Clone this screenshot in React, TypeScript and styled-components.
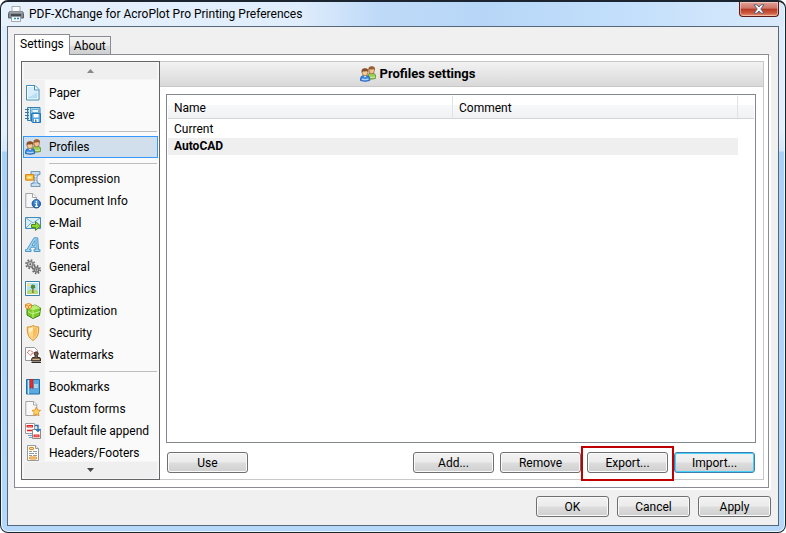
import React from "react";
import styled, { createGlobalStyle, css } from "styled-components";

const GlobalStyle = createGlobalStyle`
  * { box-sizing: border-box; }
  body { margin: 0; background: #fff; }
  button, input, table { font: inherit; color: inherit; }
`;

const Window = styled.main`
  height: 100vh;
  display: flex;
  flex-direction: column;
  padding: 0 6px 6px;
  border: 1px solid #1c252f;
  border-top-width: 2px;
  border-radius: 8px;
  background: linear-gradient(180deg, #dcebfb 0, #e3effb 130px, #d3e6fa 149px, #a9d0f5 150px, #b5d8fa 100%);
  box-shadow: inset 0 0 0 1px #e8f6ff;
  font-family: Roboto, "Noto Sans", sans-serif;
  font-size: 12px;
  line-height: 16px;
  color: #000;
`;

const TitleBar = styled.header`
  flex: none;
  height: 24px;
  margin: 0 -5px;
  padding-left: 6px;
  display: flex;
  align-items: center;
  gap: 5px;
  border-radius: 6px 6px 0 0;
  background: linear-gradient(90deg, #e6f1fc 0, #e0edfc 38%, #bfdaf8 48%, #b7d6f7 62%, #c3dffb 80%, #d9eafb 100%);
`;

const Title = styled.h1`
  margin: 0;
  flex: 1;
  font-size: 12px;
  font-weight: 400;
`;

const CloseButton = styled.button`
  align-self: flex-start;
  width: 40px;
  height: 15px;
  margin-right: 5px;
  padding: 0;
  display: grid;
  place-items: center;
  border: 1px solid #5a1a1a;
  border-top: 0;
  border-radius: 0 0 4px 4px;
  background: linear-gradient(180deg, #dfa299 0, #cf7467 45%, #b43823 50%, #cf5b40 80%, #e49a78 100%);
  box-shadow: inset 0 0 0 1px rgba(255, 220, 210, 0.55);
`;

const Client = styled.div`
  flex: 1;
  min-height: 0;
  display: flex;
  flex-direction: column;
  border: 1px solid #566779;
  background: #f0f0f0;
  padding: 7px 7px 8px 6px;
`;

const Tabs = styled.div`
  flex: none;
  display: flex;
  align-items: flex-end;
`;

const Tab = styled.button<{ $active?: boolean }>`
  height: 18px;
  padding: 0 4px;
  font-size: 12px;
  line-height: 16px;
  border: 1px solid #898c95;
  border-bottom: 0;
  border-left: 0;
  background: linear-gradient(180deg, #f3f3f3 0, #ebebeb 50%, #dcdcdc 51%, #cfcfcf 100%);
  ${(p) =>
    p.$active &&
    css`
      height: 21px;
      margin-bottom: -1px;
      padding: 0 5px 2px;
      border-left: 1px solid #898c95;
      background: #fff;
      z-index: 1;
    `}
`;

const TabPage = styled.section`
  flex: 1;
  min-height: 0;
  display: flex;
  margin-right: 2px;
  padding: 6px 4px 7px 6px;
  border: 1px solid #898c95;
  background: #fff;
  box-shadow: 2px 2px 0 #fff;
`;

const Sidebar = styled.nav`
  flex: none;
  width: 139px;
  display: flex;
  flex-direction: column;
  border: 1px solid #646469;
  background: #fafafa;
`;

const ScrollArrow = styled.button`
  flex: none;
  height: 18px;
  padding: 0;
  display: grid;
  place-items: center;
  border: 1px solid #f6f6f6;
  border-width: 1px 2px;
  background: #efefef;
`;

const Menu = styled.div`
  flex: 1;
  min-height: 0;
  overflow: hidden;
  padding-top: 2px;
  background: linear-gradient(90deg, #f1f1f1 23px, #fafafa 23px);
`;

const MenuItem = styled.button<{ $selected?: boolean }>`
  width: calc(100% - 2px);
  height: 22px;
  margin-left: 1px;
  padding: 0 0 0 1px;
  display: flex;
  align-items: center;
  gap: 8px;
  border: 1px solid ${(p) => (p.$selected ? "#3399ff" : "transparent")};
  background: ${(p) => (p.$selected ? "#d1dfec" : "transparent")};
  text-align: left;
  white-space: nowrap;
`;

const Separator = styled.hr`
  height: 1px;
  margin: 5px 2px 4px 27px;
  border: 0;
  background: #bdbdbd;
`;

const Panel = styled.div`
  flex: 1;
  min-width: 0;
  display: flex;
  flex-direction: column;
  border: 1px solid #c8c8c8;
  border-left: 0;
`;

const PanelTitle = styled.h2`
  flex: none;
  height: 25px;
  margin: 0;
  display: flex;
  align-items: center;
  justify-content: center;
  gap: 4px;
  padding-right: 88px;
  border-bottom: 1px solid #c8c8c8;
  background: linear-gradient(180deg, #f2f2f2, #d9d9d9);
  font-size: 13px;
  font-weight: 700;
`;

const ListBox = styled.div`
  flex: 1;
  min-height: 0;
  margin: 7px 7px 0 6px;
  padding: 1px;
  border: 1px solid #828790;
`;

const Table = styled.table`
  width: 100%;
  table-layout: fixed;
  border-collapse: separate;
  border-spacing: 0;
  text-align: left;
`;

const HeadCell = styled.th<{ $width?: string }>`
  width: ${(p) => p.$width || "auto"};
  height: 23px;
  padding: 2px 6px 0;
  font-weight: 400;
  border-right: 1px solid #dfe2e6;
  border-bottom: 1px solid #d5d5d5;
  background: linear-gradient(180deg, #fff 40%, #f7f8fa 41%, #f1f2f4 100%);
  &:last-child {
    border-right: 0;
  }
`;

const Row = styled.tr<{ $selected?: boolean }>`
  font-weight: ${(p) => (p.$selected ? 700 : 400)};
  td:not(:last-child) {
    background: ${(p) => (p.$selected ? "#efefef" : "transparent")};
  }
`;

const Cell = styled.td`
  height: 17px;
  padding: 0 6px;
  line-height: 17px;
`;

const Spacer = styled.tr`
  height: 2px;
`;

const Actions = styled.div`
  flex: none;
  display: flex;
  align-items: center;
  gap: 6px;
  padding: 9px 8px 6px 7px;
`;

const PushButton = styled.button<{ $focused?: boolean; $small?: boolean }>`
  width: ${(p) => (p.$small ? 73 : 81)}px;
  height: 21px;
  padding: 0;
  border: 1px solid ${(p) => (p.$focused ? "#3c7fb1" : "#707070")};
  border-radius: 3px;
  background: linear-gradient(180deg, #f2f2f2 0, #ebebeb 48%, #dddddd 52%, #cfcfcf 100%);
  box-shadow: inset 0 0 0 1px ${(p) => (p.$focused ? "#48d0f8" : "#fafafa")};
`;

const Push = styled.span`
  flex: 1;
`;

const Highlight = styled.span`
  position: relative;
  display: flex;
  &::after {
    content: "";
    position: absolute;
    inset: -6px -6px -8px;
    border: 2px solid #c00000;
    pointer-events: none;
  }
`;

const Footer = styled.footer`
  flex: none;
  display: flex;
  justify-content: flex-end;
  gap: 8px;
  padding-top: 8px;
`;

const Svg = styled.svg`
  flex: none;
  display: block;
`;

const person = (
  <>
    <path d="M8 8.500q.5-1 2.500-1.200h2.500q2.500.3 2.700 2.700v2.300q-3 1.200-6 .7z" fill="#9ccc55" stroke="#5c8a2a" strokeWidth=".8" />
    <path d="M10 11.200q2.500.6 5-.2" stroke="#d5efa5" fill="none" />
    <ellipse cx="11.700" cy="4.600" rx="2.700" ry="3.200" fill="#f0c090" stroke="#8b5b2a" strokeWidth=".6" />
    <path d="M8.500 4.800C7.800 1.500 9.500.3 11.700.3s4 1.200 3.300 4.500l-1-1.800q-2 .8-4.500.2z" fill="#9a5f30" />
    <path d="M.5 14.600v-1.900q.2-2.900 3-3.200h3q3 .3 3.200 3.200v1.900q-4.600 1.400-9.200 0z" fill="#3b86e0" stroke="#2561b2" strokeWidth=".9" />
    <path d="M3.500 9.500 5 11.500l1.600-2z" fill="#fff" />
    <path d="M1.700 13.100q3.400 1 6.800 0" fill="none" stroke="#a8d3ff" strokeWidth="1.300" />
    <ellipse cx="5" cy="6.600" rx="2.800" ry="3.200" fill="#f3c797" stroke="#8b5b2a" strokeWidth=".6" />
    <path d="M1.700 6.800C1 3.300 2.700 2.200 5 2.200s4.100 1.100 3.300 4.600l-1-1.800q-2 .8-4.500.2z" fill="#85502a" />
  </>
);

const icons: Record<string, React.ReactNode> = {
  paper: (
    <>
      <path d="M1.500.5h8.500l4 4v10.500H1.500z" fill="#fff" stroke="#3f8fbd" />
      <path d="M3 2h6.500v3.500h3V9L3 12z" fill="#d9eefa" />
      <path d="M3 12q4-1 9.500-5v6.500H3z" fill="#b7def3" />
      <path d="M9.500.8v4.200h4.300" fill="#f6fcff" stroke="#3f8fbd" />
    </>
  ),
  save: (
    <>
      <path d="M2.500.5h12.500v13H2.500z" fill="#a4d3ef" stroke="#357fae" />
      <path d="M4.500 1v12" stroke="#dff3fd" />
      <path d="M5.500 1v12" stroke="#5c9dc5" />
      <path d="M7 2.500h6.500v3H7z" fill="#e8f6fd" stroke="#6bacd2" />
      <path d="M0 2.500h4M0 5.500h4M0 8.500h4M0 11.500h4" stroke="#3b759c" />
      <path d="M6.500 6.500h9v9h-8l-1-1z" fill="#5ba6de" stroke="#2874b4" />
      <path d="M8.500 7h5v3.500h-5zM9 12h4.500v3H9z" fill="#fff" />
      <path d="M10 12.500h1.500V15H10z" fill="#3b86c2" />
    </>
  ),
  profiles: person,
  compression: (
    <>
      <path d="M6 .5h9v3h-2v1.500h-1v6H13v1.500h2v3H6v-3h2V11h1.500V5H8V3.500H6z" fill="#a9c9e2" stroke="#6c94b1" strokeWidth=".9" />
      <path d="M9.500 5.500h2M9.500 8h2M9.500 10.500h2M7 2h7M7 14h7" stroke="#e9f4fb" />
      <rect x=".6" y="3.600" width="8" height="5.500" rx=".7" fill="#ffc845" stroke="#d98a1c" strokeWidth="1.200" />
      <path d="M2.500 5.500h4v1.800h-4z" fill="#fff1ae" />
    </>
  ),
  document: (
    <>
      <path d="M.8.500h7l3.700 3.700v10.300H.8z" fill="#f7f7f7" stroke="#a4a4a4" />
      <path d="M7.500.5v4h4" fill="#fff" stroke="#a4a4a4" />
      <circle cx="11.300" cy="10.800" r="4.200" fill="#3377c6" stroke="#174f95" />
      <circle cx="11.300" cy="9" r="2.500" fill="#70aee9" opacity=".5" />
      <path d="M11.500 8v1.400M10.300 10.500h1.200v2.700M10 13.300h3" stroke="#fff" strokeWidth="1.200" fill="none" />
    </>
  ),
  email: (
    <>
      <path d="M.5 2.500h15v11H.5z" fill="#dceefa" stroke="#418bb8" />
      <path d="m1 3 7 5 7-5M1 13l5-5M15 13l-5-5" fill="none" stroke="#6faed2" />
      <path d="M6.500 9.500h4v-3l5 4.500-5 4.500v-3h-4z" fill="#8cd52c" stroke="#4b861b" />
    </>
  ),
  fonts: (
    <>
      <path d="M.5 14.500v-1.800h1.300L9 .8h3.700l.9 11.900h1.400v1.800H9v-1.800h1.400l-.2-2.500H6l-1.400 2.500h1.500v1.800zM7 8.300h3.100L9.800 3.700z" fill="#a9d8f4" stroke="#3f8ec4" strokeWidth=".9" fillRule="evenodd" />
      <path d="M11.200 2l.8 11" stroke="#7dbde5" strokeWidth="1.500" />
    </>
  ),
  general: (
    <>
      <circle cx="5.200" cy="5.200" r="4" fill="none" stroke="#747474" strokeWidth="2.200" strokeDasharray="1.600 1.540" />
      <circle cx="5.200" cy="5.200" r="2.700" fill="#d2d2d2" stroke="#858585" strokeWidth="1.600" />
      <circle cx="5.200" cy="5.200" r="1" fill="#666" />
      <circle cx="11.500" cy="10.700" r="3.600" fill="none" stroke="#666" strokeWidth="2" strokeDasharray="1.410 1.410" />
      <circle cx="11.500" cy="10.700" r="2.300" fill="#d0d0d0" stroke="#777" strokeWidth="1.500" />
      <circle cx="11.500" cy="10.700" r=".9" fill="#606060" />
    </>
  ),
  graphics: (
    <>
      <path d="M.5.500h14v14H.5z" fill="#fff" stroke="#377fac" />
      <path d="M2 2h11v7H2z" fill="#b5e0f8" />
      <path d="M2 9.500q5-2 11 0V13H2z" fill="#b2d97a" />
      <path d="M7.900 7v5" stroke="#774b1d" strokeWidth="1" />
      <path d="M7.900 3.500c1.700 0 2.500 1 2.200 2 .8.900-.2 2.200-1.500 2-1.700.6-3.400-.2-2.700-1.700-.2-1.300.6-2.300 2-2.300z" fill="#4f8a30" />
      <circle cx="3.700" cy="3.700" r="1.500" fill="#ffe26e" />
    </>
  ),
  optimization: (
    <>
      <path d="m2 4.500 8-2.500 5.500 3-1 7.500-6.500 3-6-3.500z" fill="#7bcb2d" stroke="#3a830c" />
      <path d="m2 4.500 6 2.700L15.500 5 10 2z" fill="#bded72" />
      <path d="M8 7.500v7.500M3 8.500l4.500 2.300L15 8.500" stroke="#d1f694" strokeWidth=".9" fill="none" />
      <path d="m.5 1.500 3-1 3 1v3l-3 1.500-3-1.500z" fill="#ffe0a0" stroke="#e58520" />
      <path d="m1 2 2.500 1L6 2M3.500 3v2.500" stroke="#e58520" fill="none" />
    </>
  ),
  security: (
    <>
      <path d="M8 .5q2.500 1.700 5.700 1.500C14 9 12.500 12.500 8 15.500 3.500 12.500 2 9 2.300 2 5.500 2.200 8 .5 8 .5z" fill="#fdd88a" stroke="#d88d25" />
      <path d="M8 2v12q4.300-3 4.300-10.500Q10 3.200 8 2z" fill="#f8bd60" />
      <path d="M4 3.500q2-.3 4-1.500v3L4 8z" fill="#fff1ca" />
    </>
  ),
  watermarks: (
    <>
      <path d="M.5.500h9l3 3v10H.5z" fill="#fff" stroke="#999" />
      <path d="m4.500 3-2 2.500 2 2M6 3.500l2 2-2.500 3" stroke="#d62c24" fill="none" strokeDasharray="2 .6" />
      <path d="M9.500 5.500q1.700-1.300 3.300 0 1 1.200-.5 3v2h2.500l.7 1.500v2h-8.800v-2l.8-1.500H10V8.500q-1.500-1.800-.5-3z" fill="#745d4a" stroke="#392b21" />
      <path d="M7.500 12.500h7" stroke="#d8b38c" />
      <path d="M6.500 15.500H16" stroke="#292929" />
    </>
  ),
  bookmarks: (
    <>
      <path d="M1.500.5h13v14.500h-13z" fill="#5ba9df" stroke="#1f6fa9" />
      <path d="M3.500 1v14" stroke="#c9e8fa" />
      <path d="M9 6h4M9 8h4" stroke="#fff" />
      <path d="M5 0h3v9.500L6.500 8.500 5 9.500z" fill="#ed2f25" stroke="#a7130f" strokeWidth=".5" />
    </>
  ),
  forms: (
    <>
      <path d="M.8.500h8l3 3v11H.8z" fill="#f8f8f8" stroke="#a4a4a4" />
      <path d="M8.500.5v3.500h3.300" fill="#fff" stroke="#a4a4a4" />
      <path d="m11.300 6 1.300 3 3 .4-2.300 2.100.7 3.300-2.700-1.600-2.800 1.600.7-3.300L7 9.400l3-.4z" fill="#ffd361" stroke="#df9227" strokeWidth=".9" />
    </>
  ),
  append: (
    <>
      <path d="M.5.500h9v10h-9z" fill="#fff" stroke="#9b9b9b" />
      <rect x="2" y="2.500" width="5.500" height="1.500" fill="#ffb4ad" stroke="#df2525" />
      <path d="M2 7.500h6" stroke="#df2525" strokeWidth="1.600" />
      <path d="M7.500 6.500h8v9h-8z" fill="#fff" stroke="#8c8c8c" />
      <rect x="9" y="12" width="5" height="1.800" fill="#ffb4ad" stroke="#df2525" />
      <path d="M10 2.500h3v5M10.500 6l2.500 2.300L15.500 6" fill="none" stroke="#2876b7" strokeWidth="1.400" />
      <path d="M3 12.500h4M4 14.500h3" stroke="#65a5d1" />
    </>
  ),
  headers: (
    <>
      <path d="M2.500.5h8l3 3v12h-11z" fill="#fff" stroke="#999" />
      <path d="M10.500.5v3h3" fill="#eee" stroke="#999" />
      <rect x="4.500" y="2.500" width="4" height="2" rx=".5" fill="#ffe3a5" stroke="#e9851b" />
      <path d="M4 6.500h3m1 0h4M4 8.500h5m1 0h2M4 10.500h3m1 0h4" stroke="#999" />
      <rect x="4.500" y="12" width="7" height="2" rx=".5" fill="#ffe3a5" stroke="#e9851b" />
    </>
  ),
  printer: (
    <>
      <path d="M4 .5h8V6H4z" fill="#f9fbfd" stroke="#91989e" strokeWidth=".8" />
      <path d="M1.500 5.500h13l1 2v4.500H.5V7.500z" fill="#858b91" stroke="#5b6168" />
      <path d="M1.500 6h13" stroke="#b6bbc0" />
      <path d="M3 8h10v3H3z" fill="#454b52" />
      <path d="M3.500 10.500h9v5h-9z" fill="#f4fafe" stroke="#8d959b" strokeWidth=".8" />
      <path d="M6 12.500h2" stroke="#339b9d" strokeWidth="1.500" />
      <path d="M9 12.500h2" stroke="#2b7bd0" strokeWidth="1.500" />
    </>
  ),
};

function Icon({ name }: { name: string }) {
  return (
    <Svg width="16" height="16" viewBox="0 0 16 16" aria-hidden="true">
      {icons[name]}
    </Svg>
  );
}

const groups: [string, string][][] = [
  [["paper", "Paper"], ["save", "Save"]],
  [["profiles", "Profiles"]],
  [
    ["compression", "Compression"],
    ["document", "Document Info"],
    ["email", "e-Mail"],
    ["fonts", "Fonts"],
    ["general", "General"],
    ["graphics", "Graphics"],
    ["optimization", "Optimization"],
    ["security", "Security"],
    ["watermarks", "Watermarks"],
  ],
  [
    ["bookmarks", "Bookmarks"],
    ["forms", "Custom forms"],
    ["append", "Default file append"],
    ["headers", "Headers/Footers"],
  ],
];

export default function App() {
  return (
    <>
      <GlobalStyle />
      <Window>
        <TitleBar>
          <Icon name="printer" />
          <Title>PDF-XChange for AcroPlot Pro Printing Preferences</Title>
          <CloseButton aria-label="Close">
            <Svg width="12" height="10" viewBox="0 0 12 10" aria-hidden="true">
              <path d="M1 .8h3L6 3 8 .8h3L7.800 5 11 9.200H8L6 7 4 9.200H1L4.200 5z" fill="#f7f7f7" stroke="#59637a" />
            </Svg>
          </CloseButton>
        </TitleBar>
        <Client>
          <Tabs role="tablist">
            <Tab role="tab" aria-selected="true" $active>Settings</Tab>
            <Tab role="tab" aria-selected="false">About</Tab>
          </Tabs>
          <TabPage>
            <Sidebar>
              <ScrollArrow aria-label="Scroll up">
                <Svg width="7" height="4" viewBox="0 0 7 4"><path d="M0 4 3.500 0 7 4z" fill="#888" /></Svg>
              </ScrollArrow>
              <Menu>
                {groups.map((group, i) => (
                  <React.Fragment key={i}>
                    {i > 0 && <Separator />}
                    {group.map(([icon, label]) => (
                      <MenuItem key={label} $selected={label === "Profiles"}>
                        <Icon name={icon} />
                        {label}
                      </MenuItem>
                    ))}
                  </React.Fragment>
                ))}
              </Menu>
              <ScrollArrow aria-label="Scroll down">
                <Svg width="7" height="4" viewBox="0 0 7 4"><path d="M0 0h7L3.500 4z" fill="#444" /></Svg>
              </ScrollArrow>
            </Sidebar>
            <Panel>
              <PanelTitle>
                <Icon name="profiles" />
                Profiles settings
              </PanelTitle>
              <ListBox>
                <Table>
                  <thead>
                    <tr>
                      <HeadCell $width="285px">Name</HeadCell>
                      <HeadCell>Comment</HeadCell>
                      <HeadCell $width="16px" aria-hidden="true" />
                    </tr>
                  </thead>
                  <tbody>
                    <Spacer aria-hidden="true" />
                    <Row><Cell>Current</Cell><Cell /><Cell /></Row>
                    <Row $selected><Cell>AutoCAD</Cell><Cell /><Cell /></Row>
                  </tbody>
                </Table>
              </ListBox>
              <Actions>
                <PushButton>Use</PushButton>
                <Push />
                <PushButton>Add...</PushButton>
                <PushButton>Remove</PushButton>
                <Highlight><PushButton>Export...</PushButton></Highlight>
                <PushButton $focused>Import...</PushButton>
              </Actions>
            </Panel>
          </TabPage>
          <Footer>
            <PushButton $small>OK</PushButton>
            <PushButton $small>Cancel</PushButton>
            <PushButton $small>Apply</PushButton>
          </Footer>
        </Client>
      </Window>
    </>
  );
}
